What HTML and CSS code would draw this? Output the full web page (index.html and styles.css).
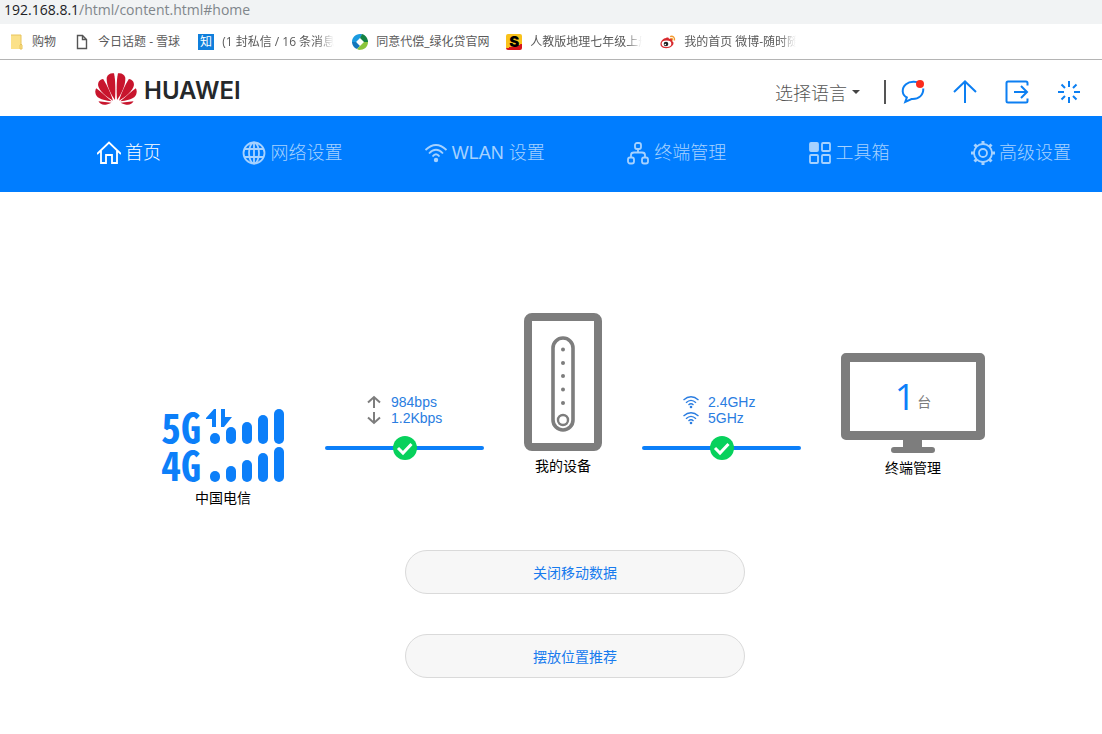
FILE: index.html
```html
<!DOCTYPE html>
<html lang="zh-CN">
<head>
<meta charset="utf-8">
<title>HUAWEI</title>
<link rel="stylesheet" href="styles.css">
</head>
<body>
<div class="address"><span class="address-host">192.168.8.1</span>/html/content.html#home</div>

<nav class="bookmarks" aria-label="书签">
  <a class="bookmark" href="#"><svg class="bookmark-icon" viewBox="0 0 16 16"><path d="M3 1h10v9l1 1v4H3z" fill="#fbe189"/><path d="M3 1h10v9l1 1v4h-2V11l1-1" fill="none" stroke="#e8c45c"/></svg><span class="bookmark-text">购物</span></a>
  <a class="bookmark" href="#"><svg class="bookmark-icon" viewBox="0 0 16 16" fill="none" stroke="#555" stroke-width="1.4"><path d="M3.500 1.500h5l4 4v9h-9zM8.500 1.500v4h4"/></svg><span class="bookmark-text">今日话题 - 雪球</span></a>
  <a class="bookmark" href="#"><span class="zhi-icon">知</span><span class="bookmark-text bookmark-long bookmark-fade">(1 封私信 / 16 条消息</span></a>
  <a class="bookmark" href="#"><svg class="bookmark-icon" viewBox="0 0 16 16"><path d="M8 0C3 0 0 4 0 8l3 5 3-1-2-4 5-5 1-3z" fill="#1b9be0"/><path d="M0 8c0 3 2 6 5 7l3-3-4-4z" fill="#1477bb"/><path d="M10 0c4 1 6 5 6 8h-4L8 4z" fill="#138243"/><path d="M16 8c0 5-4 8-9 8l-2-1 7-7z" fill="#8bc53c"/></svg><span class="bookmark-text bookmark-long">同意代偿_绿化贷官网</span></a>
  <a class="bookmark" href="#"><span class="s-icon">S</span><span class="bookmark-text bookmark-long bookmark-fade">人教版地理七年级上册</span></a>
  <a class="bookmark" href="#"><svg class="bookmark-icon" viewBox="0 0 16 16"><path d="M6 4c2-1 3 0 3 1 3-1 4 0 3 2 2 1 2 3 0 5-3 3-9 3-11 0C-1 9 3 4 6 4z" fill="#d82a2f"/><ellipse cx="6.500" cy="9.800" rx="4.800" ry="3.200" fill="#fff"/><circle cx="6" cy="10" r="2.300" fill="#222"/><circle cx="5.300" cy="10.500" r=".8" fill="#fff"/><path d="M10 2.500c3-1 5 1 4.500 4M10.500 4.500c1.500-.3 2.500.5 2 2" fill="none" stroke="#f29a30" stroke-width="1.300"/></svg><span class="bookmark-text bookmark-long bookmark-fade">我的首页 微博-随时随</span></a>
</nav>

<header class="header">
  <a class="brand" href="#">
    <svg class="brand-mark" viewBox="0 0 126 97" fill="#c8152d">
      <g id="petals"><path d="M60 82C62 50 61 18 57 1C47-1 37 4 35 14C33 34 45 62 60 82z"/><path d="M54 84C45 55 34 34 24 18C13 20 7 28 9 39C12 53 32 72 54 84z"/><path d="M50 86C33 70 17 57 3 46C-2 54 0 66 7 73C15 80 33 84 50 86z"/><path d="M49 90L10 86C14 94 23 98 32 96C40 94 45 92 49 90z"/></g>
      <use href="#petals" transform="matrix(-1 0 0 1 126 0)"/>
    </svg>
    <span class="brand-name">HUAWEI</span>
  </a>
  <div class="tools">
    <div class="language">
      <select class="language-select" aria-label="选择语言"><option>选择语言</option></select>
      <svg class="language-caret" viewBox="0 0 8 4"><path d="M0 0h8L4 4z" fill="#444"/></svg>
    </div>
    <span class="divider"></span>
    <div class="tool-icons">
      <button class="tool" aria-label="消息"><svg viewBox="0 0 24 24"><path d="M19 3.500C16 1.300 9 1 5 4.200C0 8.500 1 15 5.800 17.500L4.300 21.800L10.500 19C18 19.500 22.500 15 22.300 8.500"/><circle class="alert" cx="19" cy="4" r="4"/></svg></button>
      <button class="tool" aria-label="更新"><svg viewBox="0 0 24 24"><path d="M12 23V2M1 12L12 1.500L23 12"/></svg></button>
      <button class="tool" aria-label="退出"><svg viewBox="0 0 24 24"><path d="M22.500 5.500V3Q22.500 1.500 21 1.500H3Q1.500 1.500 1.500 3V21Q1.500 22.500 3 22.500H21Q22.500 22.500 22.500 21V18.500M9 12H22M16 6L22 12L16 18"/></svg></button>
      <button class="tool" aria-label="重启"><svg viewBox="0 0 24 24"><path d="M12 1V7M12 17V23M1 12H7M17 12H23M4.500 4.500L8 8M16 16L19.500 19.500M19.500 4.500L16 8M8 16L4.500 19.500"/></svg></button>
    </div>
  </div>
</header>

<nav class="menu" aria-label="主菜单">
  <a class="menu-item menu-active" href="#home"><svg class="menu-icon" viewBox="0 0 24 24"><path d="M0 13L12 1.500L24 13M4 10V22H9V14H15V22H20V10"/></svg>首页</a>
  <a class="menu-item" href="#network"><svg class="menu-icon" viewBox="0 0 24 24"><circle cx="12" cy="12" r="10.500"/><ellipse cx="12" cy="12" rx="5" ry="10.500"/><path d="M12 1.500V22.500M2.500 8H21.500M2.500 16H21.500"/></svg>网络设置</a>
  <a class="menu-item" href="#wlan"><svg class="menu-icon" viewBox="0 0 24 24"><path d="M1.500 9Q12-1 22.500 9M5 12.500Q12 5 19 12.500M8.500 15.500Q12 11 15.500 15.500"/><circle class="dot" cx="12" cy="19" r="2.200"/></svg>WLAN 设置</a>
  <a class="menu-item" href="#devices"><svg class="menu-icon" viewBox="0 0 24 24"><rect x="9" y="2" width="6" height="6" rx="2"/><rect x="2" y="16.500" width="6" height="6" rx="2"/><rect x="16" y="16.500" width="6" height="6" rx="2"/><path d="M12 8V11.500M5 16.500V14Q5 11.500 8 11.500H16Q19 11.500 19 14V16.500"/></svg>终端管理</a>
  <a class="menu-item" href="#tools"><svg class="menu-icon" viewBox="0 0 24 24"><rect class="solid" x="2" y="2" width="8" height="8" rx="1"/><rect x="14" y="2" width="8" height="8" rx="1"/><rect x="2" y="14" width="8" height="8" rx="1"/><rect x="14" y="14" width="8" height="8" rx="1"/></svg>工具箱</a>
  <a class="menu-item" href="#advanced"><svg class="menu-icon" viewBox="0 0 24 24"><circle cx="12" cy="12" r="9"/><circle cx="12" cy="12" r="4"/><path class="teeth" d="M12 0V3M12 21V24M0 12H3M21 12H24M3.500 3.500L5.500 5.500M18.500 18.500L20.500 20.500M20.500 3.500L18.500 5.500M5.500 18.500L3.500 20.500"/></svg>高级设置</a>
</nav>

<main class="home">
  <section class="topology">
    <div class="node node-signal">
      <div class="signal"><span class="signal-type">5G</span><svg class="signal-bars" viewBox="0 0 79 35"><path d="M0 9L8 0H10V18H6V10H0zM15 0H19V8H26L18 18H15z"/><rect x="4" y="24" width="10" height="11" rx="5"/><rect x="20" y="18" width="10" height="17" rx="5"/><rect x="36" y="13" width="10" height="22" rx="5"/><rect x="52" y="6" width="10" height="29" rx="5"/><rect x="68" y="0" width="10" height="35" rx="5"/></svg></div>
      <div class="signal"><span class="signal-type">4G</span><svg class="signal-bars" viewBox="0 0 79 35"><rect x="4" y="24" width="10" height="11" rx="5"/><rect x="20" y="19" width="10" height="16" rx="5"/><rect x="36" y="13" width="10" height="22" rx="5"/><rect x="52" y="6" width="10" height="29" rx="5"/><rect x="68" y="0" width="10" height="35" rx="5"/></svg></div>
      <div class="caption">中国电信</div>
    </div>

    <div class="connection">
      <div class="reading"><svg class="reading-icon arrow" viewBox="0 0 16 16"><path d="M8 14V3M2 8.500L8 3L14 8.500"/></svg>984bps</div>
      <div class="reading"><svg class="reading-icon arrow" viewBox="0 0 16 16"><path d="M8 2V13M2 7.500L8 13L14 7.500"/></svg>1.2Kbps</div>
      <div class="wire"><svg class="check" viewBox="0 0 24 24"><circle cx="12" cy="12" r="12"/><path d="M5 12L10 17L18.500 8"/></svg></div>
    </div>

    <div class="node">
      <svg class="router" viewBox="0 0 78 138"><rect x="4" y="4" width="70" height="130" rx="4" stroke-width="8"/><rect x="29" y="25" width="20" height="92" rx="10" stroke-width="3.600"/><g class="lamp"><circle cx="39" cy="36.500" r="2"/><circle cx="39" cy="50" r="2"/><circle cx="39" cy="63" r="2"/><circle cx="39" cy="76.500" r="2"/><circle cx="39" cy="90" r="2"/></g><circle cx="39" cy="107" r="5" stroke-width="2.400"/></svg>
      <div class="caption">我的设备</div>
    </div>

    <div class="connection">
      <div class="reading"><svg class="reading-icon wave" viewBox="0 0 16 16"><path d="M.5 6Q8-.5 15.500 6M3 8.700Q8 4 13 8.700M5.500 11Q8 8.500 10.500 11"/><circle cx="8" cy="13" r="1.300"/></svg>2.4GHz</div>
      <div class="reading"><svg class="reading-icon wave" viewBox="0 0 16 16"><path d="M.5 6Q8-.5 15.500 6M3 8.700Q8 4 13 8.700M5.500 11Q8 8.500 10.500 11"/><circle cx="8" cy="13" r="1.300"/></svg>5GHz</div>
      <div class="wire"><svg class="check" viewBox="0 0 24 24"><circle cx="12" cy="12" r="12"/><path d="M5 12L10 17L18.500 8"/></svg></div>
    </div>

    <div class="node node-monitor">
      <div class="screen"><span class="screen-count">1</span><span class="screen-unit">台</span></div>
      <svg class="stand" viewBox="0 0 44 13"><path d="M12 0H31V7H41Q44 7 44 10T41 13H3Q0 13 0 10T3 7H12z"/></svg>
      <div class="caption">终端管理</div>
    </div>
  </section>

  <div class="actions">
    <button class="action">关闭移动数据</button>
    <button class="action">摆放位置推荐</button>
  </div>
</main>
</body>
</html>
```
FILE: styles.css
```css
* { box-sizing: border-box; }

body {
  margin: 0;
  background: #fff;
  color: #000;
  font: 14px/20px "Liberation Sans", "Noto Sans CJK SC", sans-serif;
}

a { color: inherit; text-decoration: none; }
button { font: inherit; cursor: pointer; }
svg { display: block; flex: none; }

/* Address and bookmarks */
.address {
  height: 24px;
  padding-left: 4px;
  background: #f1f3f4;
  color: #80868b;
  font: 14px/20px "Open Sans", sans-serif;
}
.address-host { color: #202124; }

.bookmarks {
  display: flex;
  align-items: center;
  gap: 18px;
  height: 36px;
  padding-left: 8px;
  border-bottom: 1px solid #b4b4b4;
  color: #5a5a5a;
  font: 12px/18px "Open Sans", "Noto Sans CJK SC", sans-serif;
  white-space: nowrap;
}
.bookmark { display: flex; align-items: center; gap: 8px; }
.bookmark-icon { width: 16px; height: 16px; }
.bookmark-text { padding-top: 1px; }
.bookmark-long { width: 112px; }
.bookmark-fade {
  overflow: hidden;
  mask-image: linear-gradient(to right, #000 85%, transparent);
}
.zhi-icon, .s-icon {
  width: 16px;
  height: 16px;
  text-align: center;
}
.zhi-icon { background: #0f7fdc; color: #fff; line-height: 16px; }
.s-icon {
  border-radius: 2px;
  background: linear-gradient(165deg, #f9c21b 70%, #d8141a 71%);
  color: #000;
  font: 900 15px/15px "Inter", sans-serif;
}

/* Header */
.header {
  display: flex;
  align-items: center;
  justify-content: space-between;
  height: 56px;
  padding: 2px 21px 0 95px;
}
.brand { display: flex; align-items: center; gap: 7px; }
.brand-mark { width: 42px; height: 32px; }
.brand-name {
  padding-top: 4px;
  color: #25282b;
  font: 600 24px/28px "Inter", sans-serif;
}
.tools { display: flex; align-items: center; padding-top: 6px; }
.language { display: flex; align-items: center; gap: 5px; }
.language-select {
  appearance: none;
  padding: 3px 0 0;
  border: 0;
  background: none;
  color: #555;
  font: 300 18px/28px "Liberation Sans", "Noto Sans CJK SC", sans-serif;
}
.language-caret { width: 8px; height: 4px; }
.divider {
  width: 2px;
  height: 24px;
  margin: 0 15px 0 24px;
  background: #555;
}
.tool-icons { display: flex; gap: 28px; }
.tool { padding: 0; border: 0; background: none; }
.tool svg {
  width: 24px;
  height: 24px;
  fill: none;
  stroke: #0c7ff2;
  stroke-width: 2;
}
.tool .alert { fill: #fb2c1e; stroke: none; }

/* Main menu */
.menu {
  display: flex;
  align-items: center;
  justify-content: space-between;
  height: 76px;
  padding: 0 31px 3px 97px;
  background: #007dff;
  color: #a6d2ff;
  font: 300 18px/28px "Liberation Sans", "Noto Sans CJK SC", sans-serif;
  white-space: nowrap;
}
.menu-item { display: flex; align-items: center; gap: 4px; }
.menu-active { color: #fff; }
.menu-icon {
  width: 24px;
  height: 24px;
  fill: none;
  stroke: currentColor;
  stroke-width: 1.8;
}
.menu-icon .solid { fill: currentColor; }
.menu-icon .dot { fill: currentColor; stroke: none; }
.menu-icon .teeth { stroke-width: 3; }

/* Topology */
.home { padding: 121px 0 56px 48px; }
.topology {
  display: flex;
  align-items: flex-start;
  justify-content: center;
  gap: 40px;
  margin-right: 4px;
}
.node { display: flex; flex-direction: column; align-items: center; }
.node-signal { gap: 3px; padding-top: 96px; }
.node-monitor { padding-top: 40px; }
.caption { margin-top: 5px; line-height: 20px; }
.node-signal .caption { margin-top: 3px; }

.signal { display: flex; align-items: flex-end; gap: 4px; }
.signal-type {
  width: 41px;
  color: #0c7ff9;
  font: 700 40px/35px "Noto Sans Mono CJK SC", "Roboto", sans-serif;
}
.signal-bars { width: 79px; height: 35px; fill: #0c7ff9; }

.connection { width: 159px; padding-top: 81px; }
.reading {
  display: flex;
  align-items: center;
  gap: 9px;
  padding-left: 41px;
  color: #2a7de1;
  line-height: 16px;
}
.reading-icon { width: 16px; height: 16px; fill: none; }
.arrow { stroke: #7d7d7d; stroke-width: 2; }
.wave { stroke: #2a7de1; stroke-width: 1.3; }
.wave circle { fill: #2a7de1; stroke: none; }
.wire {
  display: flex;
  align-items: center;
  justify-content: center;
  height: 4px;
  margin-top: 20px;
  border-radius: 2px;
  background: #0c7ff9;
}
.check { width: 24px; height: 24px; fill: #07d15c; }
.check path { fill: none; stroke: #fff; stroke-width: 3; }

.router { width: 78px; height: 138px; fill: none; stroke: #7d7d7d; }
.router .lamp { fill: #7d7d7d; stroke: none; }

.screen {
  display: flex;
  align-items: center;
  justify-content: center;
  gap: 2px;
  width: 144px;
  height: 87px;
  border: 9px solid #7d7d7d;
  border-radius: 5px;
}
.screen-count { color: #0c7ff9; font: 36px/40px "Open Sans", sans-serif; }
.screen-unit { padding-top: 10px; color: #7d7d7d; }
.stand { width: 44px; height: 13px; fill: #7d7d7d; }

/* Actions */
.actions {
  display: flex;
  flex-direction: column;
  align-items: center;
  gap: 40px;
  margin-top: 42px;
}
.action {
  width: 340px;
  height: 44px;
  padding-top: 3px;
  border: 1px solid #dadada;
  border-radius: 22px;
  background: #f7f7f7;
  color: #187bee;
}
```
